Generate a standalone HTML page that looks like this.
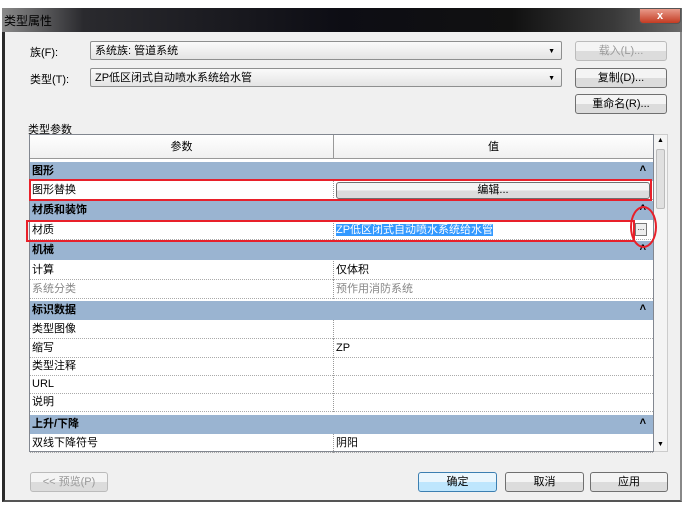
<!DOCTYPE html>
<html><head><meta charset="utf-8"><style>
*{box-sizing:border-box;margin:0;padding:0}
body{width:693px;height:507px;background:#fff;position:relative;overflow:hidden;font-family:"Liberation Sans","Noto Sans CJK SC",sans-serif;font-size:11px;color:#000}
.a{position:absolute}
.title{left:2px;top:8px;width:680px;height:26px;background:linear-gradient(90deg,#8a8a8a 0%,#2a2a2e 12%,#0d0d14 50%,#111 75%,#3a3a3a 90%,#6a6a6a 100%)}
.body{left:2px;top:32px;width:680px;height:470px;background:#f0f0f0;border-left:3px solid #2a2a2a;border-right:2px solid #888;border-bottom:2px solid #555}
.combo{background:linear-gradient(#fafafa,#e4e4e4);border:1px solid #8e8f8f;border-radius:2px;height:19px;padding:2px 4px;line-height:14px}
.combo:after{content:"▼";position:absolute;right:6px;top:3px;font-size:7px}
.btn{background:linear-gradient(#f4f4f4 50%,#dcdcdc 50%);border:1px solid #707070;border-radius:3px;height:20px;text-align:center;line-height:18px}
.tbl{left:29px;top:134px;width:625px;height:318px;background:#fff;border:1px solid #828790}
.row{position:absolute;left:0;width:623px;height:19px;line-height:18px;padding-left:2px;border-bottom:1px dotted #aaa}
.row .v{position:absolute;left:303px;top:0;height:19px;border-left:1px dotted #999;padding-left:2px}
.grp{position:absolute;left:0;width:623px;height:19px;background:#9ab4d1;font-weight:bold;line-height:19px;padding-left:2px}
.grp:after{content:"˄";position:absolute;right:7px;top:-2px;font-size:11px;font-weight:bold}
.red{position:absolute;border:2px solid #e8202a}
</style></head><body>
<div class="a title"><div class="a" style="left:2px;top:4px;color:#000;font-size:12px">类型属性</div>
<div class="a" style="left:637px;top:0;width:42px;height:16px;background:linear-gradient(#e89a8a,#c43b22);border:1px solid #555;border-radius:0 0 4px 4px;color:#fff;font-weight:bold;text-align:center;line-height:14px">x</div></div>
<div class="a body"></div>
<div class="a" style="left:30px;top:44px">族(F):</div>
<div class="a combo" style="left:90px;top:41px;width:472px">系统族: 管道系统</div>
<div class="a btn" style="left:575px;top:41px;width:92px;color:#999;border-color:#bbb">载入(L)...</div>
<div class="a" style="left:30px;top:71px">类型(T):</div>
<div class="a combo" style="left:90px;top:68px;width:472px">ZP低区闭式自动喷水系统给水管</div>
<div class="a btn" style="left:575px;top:68px;width:92px">复制(D)...</div>
<div class="a btn" style="left:575px;top:94px;width:92px">重命名(R)...</div>
<div class="a" style="left:28px;top:121px">类型参数</div>
<div class="a tbl">
<div class="a" style="left:0;top:0;width:623px;height:24px;background:linear-gradient(#fff,#f0f0f0);border-bottom:1px solid #999"><div class="a" style="left:0;width:303px;text-align:center;line-height:24px">参数</div><div class="a" style="left:303px;width:320px;text-align:center;line-height:24px;border-left:1px solid #999;height:24px">值</div></div>
<div class="grp" style="top:27px">图形</div>
<div class="row" style="top:46px">图形替换<div class="v" style="padding:1px 2px"><div class="btn" style="width:314px;height:17px;line-height:15px">编辑...</div></div></div>
<div class="grp" style="top:66px">材质和装饰</div>
<div class="row" style="top:86px">材质<div class="v" style="width:318px"><span style="background:#3399ff;color:#fff">ZP低区闭式自动喷水系统给水管</span><span class="a" style="right:4px;top:2px;width:12px;height:13px;border:1px solid #777;background:#eee;font-size:8px;line-height:8px;text-align:center">...</span></div></div>
<div class="grp" style="top:106px">机械</div>
<div class="row" style="top:126px">计算<div class="v">仅体积</div></div>
<div class="row" style="top:145px;color:#888">系统分类<div class="v">预作用消防系统</div></div>
<div class="grp" style="top:166px">标识数据</div>
<div class="row" style="top:185px">类型图像<div class="v"></div></div>
<div class="row" style="top:204px">缩写<div class="v">ZP</div></div>
<div class="row" style="top:222px">类型注释<div class="v"></div></div>
<div class="row" style="top:240px">URL<div class="v"></div></div>
<div class="row" style="top:258px">说明<div class="v"></div></div>
<div class="grp" style="top:280px">上升/下降</div>
<div class="row" style="top:299px">双线下降符号<div class="v">阴阳</div></div>
</div>
<div class="a" style="left:654px;top:134px;width:14px;height:318px;background:#f4f4f4;border:1px solid #ccc;border-left:none"><div class="a" style="left:2px;top:14px;width:9px;height:60px;background:#e0e0e0;border:1px solid #bbb;border-radius:2px"></div><div class="a" style="left:3px;top:2px;font-size:7px">▲</div><div class="a" style="left:3px;bottom:3px;font-size:7px">▼</div></div>
<div class="red" style="left:29px;top:179px;width:623px;height:22px"></div>
<div class="red" style="left:26px;top:220px;width:609px;height:22px"></div>
<div class="red" style="left:630px;top:206px;width:27px;height:42px;border-radius:50%"></div>
<div class="a btn" style="left:30px;top:472px;width:78px;color:#999;border-color:#bbb">&lt;&lt; 预览(P)</div>
<div class="a btn" style="left:418px;top:472px;width:79px;border-color:#3c7fb1;background:linear-gradient(#eaf6fd 50%,#bee6fd 50%)">确定</div>
<div class="a btn" style="left:505px;top:472px;width:79px">取消</div>
<div class="a btn" style="left:590px;top:472px;width:78px">应用</div>
</body></html>
